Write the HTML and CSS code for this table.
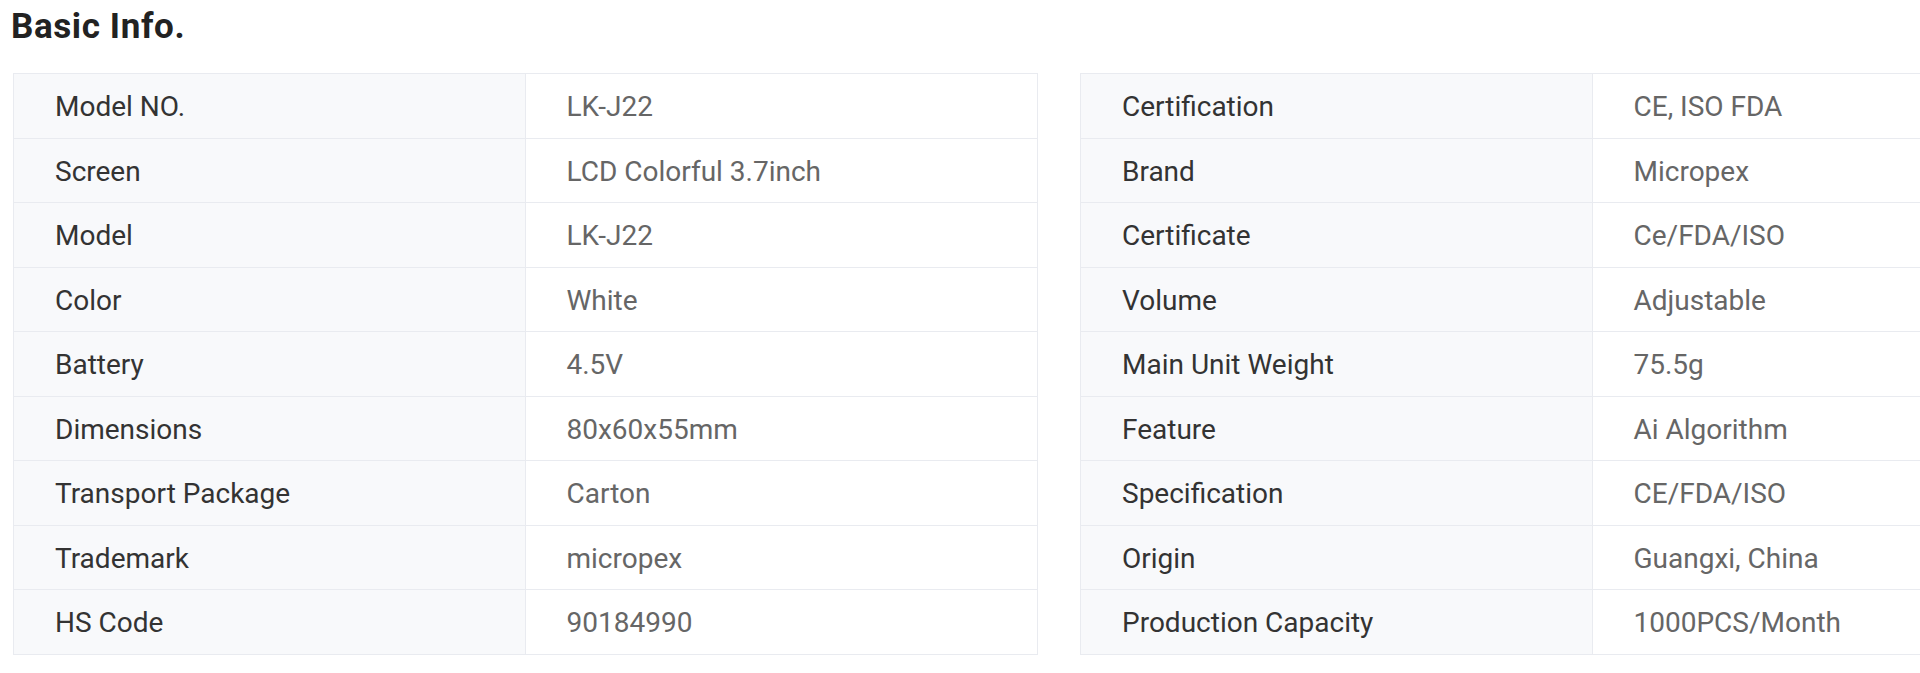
FILE: index.html
```html
<!DOCTYPE html>
<html lang="en">
<head>
<meta charset="utf-8">
<title>Basic Info.</title>
<link rel="stylesheet" href="styles.css">
</head>
<body>
<main class="page">
  <h2 class="title">Basic Info.</h2>
  <div class="tables">
    <div class="spec">
      <div class="row"><div class="label">Model NO.</div><div class="value">LK-J22</div></div>
      <div class="row"><div class="label">Screen</div><div class="value">LCD Colorful 3.7inch</div></div>
      <div class="row"><div class="label">Model</div><div class="value">LK-J22</div></div>
      <div class="row"><div class="label">Color</div><div class="value">White</div></div>
      <div class="row"><div class="label">Battery</div><div class="value">4.5V</div></div>
      <div class="row"><div class="label">Dimensions</div><div class="value">80x60x55mm</div></div>
      <div class="row"><div class="label">Transport Package</div><div class="value">Carton</div></div>
      <div class="row"><div class="label">Trademark</div><div class="value">micropex</div></div>
      <div class="row"><div class="label">HS Code</div><div class="value">90184990</div></div>
    </div>
    <div class="spec">
      <div class="row"><div class="label">Certification</div><div class="value">CE, ISO FDA</div></div>
      <div class="row"><div class="label">Brand</div><div class="value">Micropex</div></div>
      <div class="row"><div class="label">Certificate</div><div class="value">Ce/FDA/ISO</div></div>
      <div class="row"><div class="label">Volume</div><div class="value">Adjustable</div></div>
      <div class="row"><div class="label">Main Unit Weight</div><div class="value">75.5g</div></div>
      <div class="row"><div class="label">Feature</div><div class="value">Ai Algorithm</div></div>
      <div class="row"><div class="label">Specification</div><div class="value">CE/FDA/ISO</div></div>
      <div class="row"><div class="label">Origin</div><div class="value">Guangxi, China</div></div>
      <div class="row"><div class="label">Production Capacity</div><div class="value">1000PCS/Month</div></div>
    </div>
  </div>
</main>
</body>
</html>
```

FILE: styles.css
```css
html, body {
  margin: 0;
  padding: 0;
  overflow: hidden;
  background: #ffffff;
}

body {
  font-family: Roboto, "Liberation Sans", Arial, sans-serif;
}

.page {
  padding: 0 0 0 11px;
  width: 2200px;
}

.title {
  margin: 0;
  padding-top: 6px;
  height: 73px;
  box-sizing: border-box;
  font-size: 35px;
  line-height: 42px;
  font-weight: 700;
  color: #222222;
  letter-spacing: 0.6px;
}

.tables {
  display: flex;
  gap: 42px;
  margin-left: 2px;
}

.spec {
  width: 1025px;
  border: 1px solid #e9ebf0;
  box-sizing: border-box;
  display: flex;
  flex-direction: column;
}

.row {
  display: flex;
  height: 64.5px;
  box-sizing: border-box;
  border-bottom: 1px solid #e9ebf0;
}

.row:last-child {
  border-bottom: none;
  height: 63.5px;
}

.label,
.value {
  width: 50%;
  box-sizing: border-box;
  padding-left: 41px;
  padding-top: 2px;
  display: flex;
  align-items: center;
  font-size: 28px;
}

.label {
  background: #f8f9fb;
  color: #333333;
  border-right: 1px solid #e9ebf0;
}

.value {
  background: #ffffff;
  color: #666666;
}
```
